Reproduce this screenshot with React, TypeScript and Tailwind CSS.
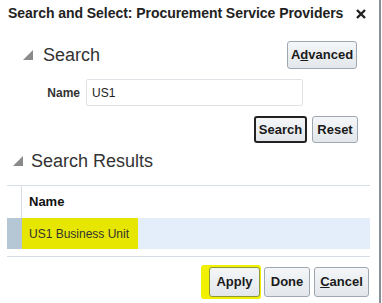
export default function App() {
  return (
    <div className="flex h-[303px] w-[382px] bg-white font-['Liberation_Sans',Arial,sans-serif] text-[#333]">
      <div className="flex w-[379px] flex-col">
        {/* Title */}
        <div className="flex h-[26px] items-center justify-between pl-[8px] pr-[13px]">
          <span className="whitespace-nowrap text-[14px] font-bold tracking-[-0.05px] text-[#222]">
            Search and Select: Procurement Service Providers
          </span>
          <svg width="10" height="10" viewBox="0 0 10 10" className="mt-[1px]">
            <path d="M1 1 L9 9 M9 1 L1 9" stroke="#222" strokeWidth="2.4" />
          </svg>
        </div>

        {/* Search header */}
        <div className="mt-[15px] flex h-[28px] items-center justify-between pl-[23px] pr-[22px]">
          <div className="flex items-center gap-[10px]">
            <Tri />
            <span className="text-[18px] leading-none text-[#333]">Search</span>
          </div>
          <Btn className="w-[70px] h-[28px]">
            A<span className="underline">d</span>vanced
          </Btn>
        </div>

        {/* Name field */}
        <div className="mt-[10px] flex items-center">
          <span className="w-[86px] pr-[6px] text-right text-[12px] font-bold text-[#333]">Name</span>
          <div className="flex h-[27px] w-[217px] items-center rounded-[2px] border border-[#dfe3e8] pl-[5px] text-[12px] text-[#222]">
            US1
          </div>
        </div>

        {/* Search / Reset */}
        <div className="mt-[10px] flex justify-end gap-[5px] pr-[21px]">
          <Btn className="w-[53px] h-[27px] !border-2 !border-[#222]">Search</Btn>
          <Btn className="w-[46px] h-[27px]">Reset</Btn>
        </div>

        {/* Search Results header */}
        <div className="mt-[9px] flex items-center gap-[8px] pl-[13px]">
          <Tri />
          <span className="text-[18px] leading-none text-[#333]">Search Results</span>
        </div>

        {/* Table */}
        <div className="mx-[7px] mt-[15px] w-[363px] border-t border-[#d6dde4]">
          <div className="flex h-[32px]">
            <div className="w-[15px] border-r border-[#d6dde4]" />
            <div className="flex items-center pl-[7px] text-[13px] font-bold text-[#111]">Name</div>
          </div>
          <div className="flex h-[31px] bg-[#e3eefa]">
            <div className="w-[15px] bg-[#b5c7d5]" />
            <div className="flex w-[116px] items-center whitespace-nowrap bg-[#e6e600] pl-[7px] text-[12px] text-[#333]">
              US1 Business Unit
            </div>
          </div>
        </div>
        <div className="mx-[7px] mt-[7px] w-[363px] border-t border-[#d6dde4]" />

        {/* Footer buttons */}
        <div className="mt-[8px] flex items-center justify-end pr-[10px]">
          <div className="mr-[3px] flex h-[34px] items-center rounded-[3px] bg-[#f0f000] pl-[8px] pr-[1px]">
            <Btn className="w-[51px] h-[30px] !bg-[#e2e600] !border-[#8c9a3c]">Apply</Btn>
          </div>
          <Btn className="w-[46px] h-[30px]">Done</Btn>
          <Btn className="ml-[4px] w-[55px] h-[30px]">
            <span className="underline">C</span>ancel
          </Btn>
        </div>
      </div>
      <div className="w-[2px] bg-[#8a8f96]" />
      <div className="w-[1px] bg-white" />
    </div>
  );
}

function Tri() {
  return (
    <svg width="10" height="10" viewBox="0 0 10 10">
      <path d="M10 0 L10 10 L0 10 Z" fill="#8a8a8a" />
    </svg>
  );
}

function Btn({ className, children }: { className?: string; children: React.ReactNode }) {
  return (
    <div
      className={`flex items-center justify-center rounded-[3px] border border-[#9fa8b2] bg-gradient-to-b from-[#f4f6f8] to-[#e3e7eb] text-[13px] font-bold text-[#1a1a1a] ${className ?? ""}`}
    >
      {children}
    </div>
  );
}
